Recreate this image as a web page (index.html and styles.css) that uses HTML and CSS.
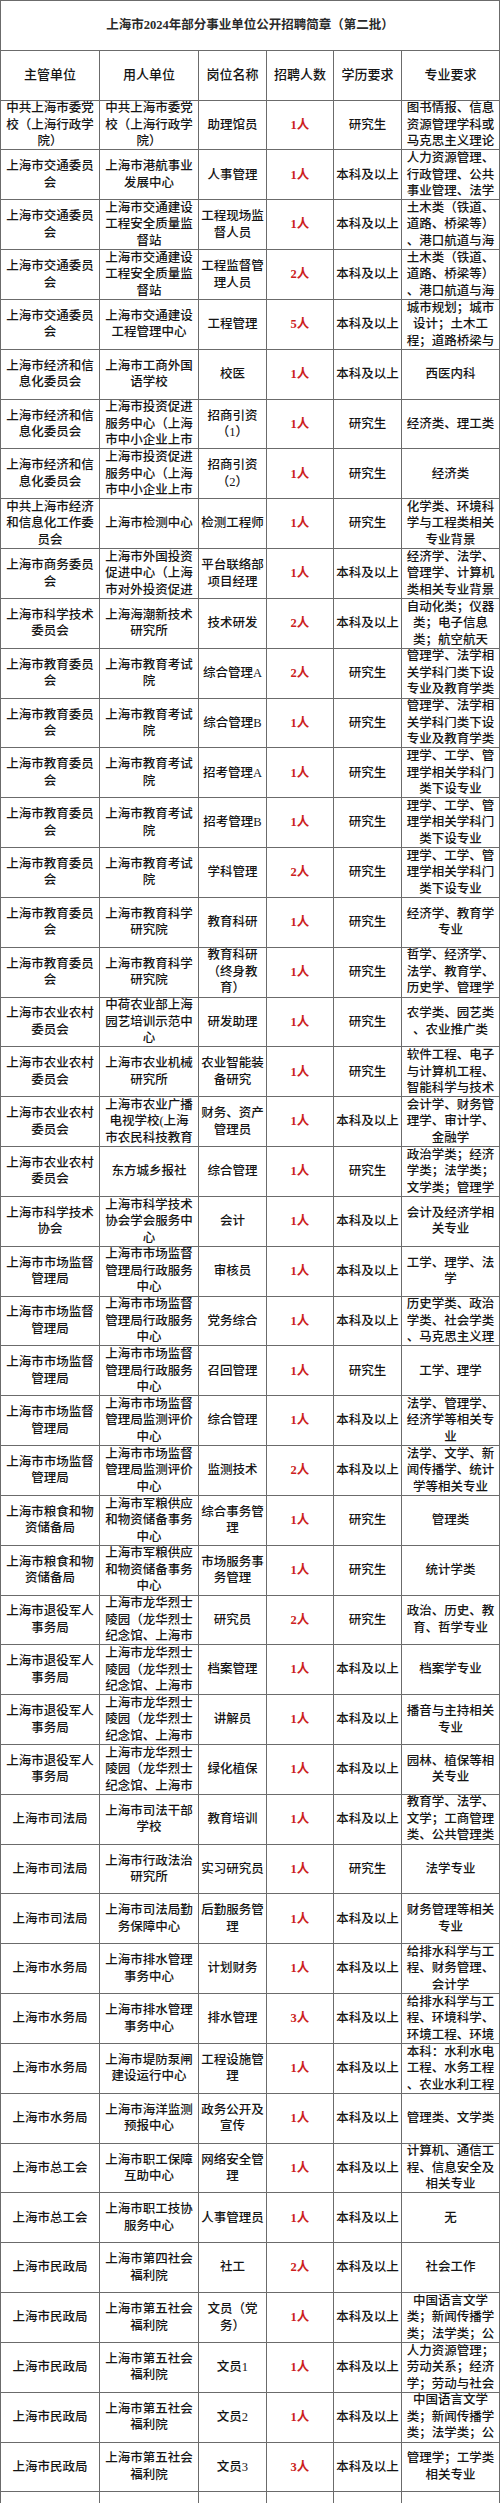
FILE: index.html
```html
<!DOCTYPE html>
<html lang="zh-CN">
<head>
<meta charset="utf-8">
<title>上海市2024年部分事业单位公开招聘简章（第二批）</title>
<link rel="stylesheet" href="styles.css">
</head>
<body>
<div class="page">
<div class="sheet">
<div class="c title"><span>上海市2024年部分事业单位公开招聘简章（第二批）</span></div>

<div class="c h"><span>主管单位</span></div><div class="c h"><span>用人单位</span></div><div class="c h"><span>岗位名称</span></div><div class="c h"><span>招聘人数</span></div><div class="c h"><span>学历要求</span></div><div class="c h"><span>专业要求</span></div>

<div class="c"><span>中共上海市委党<br>校（上海行政学<br>院）</span></div><div class="c"><span>中共上海市委党<br>校（上海行政学<br>院）</span></div><div class="c"><span>助理馆员</span></div><div class="c n"><span>1人</span></div><div class="c"><span>研究生</span></div><div class="c"><span>图书情报、信息<br>资源管理学科或<br>马克思主义理论</span></div>

<div class="c"><span>上海市交通委员<br>会</span></div><div class="c"><span>上海市港航事业<br>发展中心</span></div><div class="c"><span>人事管理</span></div><div class="c n"><span>1人</span></div><div class="c"><span>本科及以上</span></div><div class="c"><span>人力资源管理、<br>行政管理、公共<br>事业管理、法学</span></div>

<div class="c"><span>上海市交通委员<br>会</span></div><div class="c"><span>上海市交通建设<br>工程安全质量监<br>督站</span></div><div class="c"><span>工程现场监<br>督人员</span></div><div class="c n"><span>1人</span></div><div class="c"><span>本科及以上</span></div><div class="c"><span>土木类（铁道、<br>道路、桥梁等）<br>、港口航道与海</span></div>

<div class="c"><span>上海市交通委员<br>会</span></div><div class="c"><span>上海市交通建设<br>工程安全质量监<br>督站</span></div><div class="c"><span>工程监督管<br>理人员</span></div><div class="c n"><span>2人</span></div><div class="c"><span>本科及以上</span></div><div class="c"><span>土木类（铁道、<br>道路、桥梁等）<br>、港口航道与海</span></div>

<div class="c"><span>上海市交通委员<br>会</span></div><div class="c"><span>上海市交通建设<br>工程管理中心</span></div><div class="c"><span>工程管理</span></div><div class="c n"><span>5人</span></div><div class="c"><span>本科及以上</span></div><div class="c"><span>城市规划；城市<br>设计；土木工<br>程；道路桥梁与</span></div>

<div class="c"><span>上海市经济和信<br>息化委员会</span></div><div class="c"><span>上海市工商外国<br>语学校</span></div><div class="c"><span>校医</span></div><div class="c n"><span>1人</span></div><div class="c"><span>本科及以上</span></div><div class="c"><span>西医内科</span></div>

<div class="c"><span>上海市经济和信<br>息化委员会</span></div><div class="c"><span>上海市投资促进<br>服务中心（上海<br>市中小企业上市</span></div><div class="c"><span>招商引资<br>（1）</span></div><div class="c n"><span>1人</span></div><div class="c"><span>研究生</span></div><div class="c"><span>经济类、理工类</span></div>

<div class="c"><span>上海市经济和信<br>息化委员会</span></div><div class="c"><span>上海市投资促进<br>服务中心（上海<br>市中小企业上市</span></div><div class="c"><span>招商引资<br>（2）</span></div><div class="c n"><span>1人</span></div><div class="c"><span>研究生</span></div><div class="c"><span>经济类</span></div>

<div class="c"><span>中共上海市经济<br>和信息化工作委<br>员会</span></div><div class="c"><span>上海市检测中心</span></div><div class="c"><span>检测工程师</span></div><div class="c n"><span>1人</span></div><div class="c"><span>研究生</span></div><div class="c"><span>化学类、环境科<br>学与工程类相关<br>专业背景</span></div>

<div class="c"><span>上海市商务委员<br>会</span></div><div class="c"><span>上海市外国投资<br>促进中心（上海<br>市对外投资促进</span></div><div class="c"><span>平台联络部<br>项目经理</span></div><div class="c n"><span>1人</span></div><div class="c"><span>本科及以上</span></div><div class="c"><span>经济学、法学、<br>管理学、计算机<br>类相关专业背景</span></div>

<div class="c"><span>上海市科学技术<br>委员会</span></div><div class="c"><span>上海海潮新技术<br>研究所</span></div><div class="c"><span>技术研发</span></div><div class="c n"><span>2人</span></div><div class="c"><span>本科及以上</span></div><div class="c"><span>自动化类；仪器<br>类；电子信息<br>类；航空航天</span></div>

<div class="c"><span>上海市教育委员<br>会</span></div><div class="c"><span>上海市教育考试<br>院</span></div><div class="c"><span>综合管理A</span></div><div class="c n"><span>2人</span></div><div class="c"><span>研究生</span></div><div class="c"><span>管理学、法学相<br>关学科门类下设<br>专业及教育学类</span></div>

<div class="c"><span>上海市教育委员<br>会</span></div><div class="c"><span>上海市教育考试<br>院</span></div><div class="c"><span>综合管理B</span></div><div class="c n"><span>1人</span></div><div class="c"><span>研究生</span></div><div class="c"><span>管理学、法学相<br>关学科门类下设<br>专业及教育学类</span></div>

<div class="c"><span>上海市教育委员<br>会</span></div><div class="c"><span>上海市教育考试<br>院</span></div><div class="c"><span>招考管理A</span></div><div class="c n"><span>1人</span></div><div class="c"><span>研究生</span></div><div class="c"><span>理学、工学、管<br>理学相关学科门<br>类下设专业</span></div>

<div class="c"><span>上海市教育委员<br>会</span></div><div class="c"><span>上海市教育考试<br>院</span></div><div class="c"><span>招考管理B</span></div><div class="c n"><span>1人</span></div><div class="c"><span>研究生</span></div><div class="c"><span>理学、工学、管<br>理学相关学科门<br>类下设专业</span></div>

<div class="c"><span>上海市教育委员<br>会</span></div><div class="c"><span>上海市教育考试<br>院</span></div><div class="c"><span>学科管理</span></div><div class="c n"><span>2人</span></div><div class="c"><span>研究生</span></div><div class="c"><span>理学、工学、管<br>理学相关学科门<br>类下设专业</span></div>

<div class="c"><span>上海市教育委员<br>会</span></div><div class="c"><span>上海市教育科学<br>研究院</span></div><div class="c"><span>教育科研</span></div><div class="c n"><span>1人</span></div><div class="c"><span>研究生</span></div><div class="c"><span>经济学、教育学<br>专业</span></div>

<div class="c"><span>上海市教育委员<br>会</span></div><div class="c"><span>上海市教育科学<br>研究院</span></div><div class="c"><span>教育科研<br>（终身教<br>育）</span></div><div class="c n"><span>1人</span></div><div class="c"><span>研究生</span></div><div class="c"><span>哲学、经济学、<br>法学、教育学、<br>历史学、管理学</span></div>

<div class="c"><span>上海市农业农村<br>委员会</span></div><div class="c"><span>中荷农业部上海<br>园艺培训示范中<br>心</span></div><div class="c"><span>研发助理</span></div><div class="c n"><span>1人</span></div><div class="c"><span>研究生</span></div><div class="c"><span>农学类、园艺类<br>、农业推广类</span></div>

<div class="c"><span>上海市农业农村<br>委员会</span></div><div class="c"><span>上海市农业机械<br>研究所</span></div><div class="c"><span>农业智能装<br>备研究</span></div><div class="c n"><span>1人</span></div><div class="c"><span>研究生</span></div><div class="c"><span>软件工程、电子<br>与计算机工程、<br>智能科学与技术</span></div>

<div class="c"><span>上海市农业农村<br>委员会</span></div><div class="c"><span>上海市农业广播<br>电视学校(上海<br>市农民科技教育</span></div><div class="c"><span>财务、资产<br>管理员</span></div><div class="c n"><span>1人</span></div><div class="c"><span>本科及以上</span></div><div class="c"><span>会计学、财务管<br>理学、审计学、<br>金融学</span></div>

<div class="c"><span>上海市农业农村<br>委员会</span></div><div class="c"><span>东方城乡报社</span></div><div class="c"><span>综合管理</span></div><div class="c n"><span>1人</span></div><div class="c"><span>研究生</span></div><div class="c"><span>政治学类；经济<br>学类；法学类；<br>文学类；管理学</span></div>

<div class="c"><span>上海市科学技术<br>协会</span></div><div class="c"><span>上海市科学技术<br>协会学会服务中<br>心</span></div><div class="c"><span>会计</span></div><div class="c n"><span>1人</span></div><div class="c"><span>本科及以上</span></div><div class="c"><span>会计及经济学相<br>关专业</span></div>

<div class="c"><span>上海市市场监督<br>管理局</span></div><div class="c"><span>上海市市场监督<br>管理局行政服务<br>中心</span></div><div class="c"><span>审核员</span></div><div class="c n"><span>1人</span></div><div class="c"><span>本科及以上</span></div><div class="c"><span>工学、理学、法<br>学</span></div>

<div class="c"><span>上海市市场监督<br>管理局</span></div><div class="c"><span>上海市市场监督<br>管理局行政服务<br>中心</span></div><div class="c"><span>党务综合</span></div><div class="c n"><span>1人</span></div><div class="c"><span>本科及以上</span></div><div class="c"><span>历史学类、政治<br>学类、社会学类<br>、马克思主义理</span></div>

<div class="c"><span>上海市市场监督<br>管理局</span></div><div class="c"><span>上海市市场监督<br>管理局行政服务<br>中心</span></div><div class="c"><span>召回管理</span></div><div class="c n"><span>1人</span></div><div class="c"><span>研究生</span></div><div class="c"><span>工学、理学</span></div>

<div class="c"><span>上海市市场监督<br>管理局</span></div><div class="c"><span>上海市市场监督<br>管理局监测评价<br>中心</span></div><div class="c"><span>综合管理</span></div><div class="c n"><span>1人</span></div><div class="c"><span>本科及以上</span></div><div class="c"><span>法学、管理学、<br>经济学等相关专<br>业</span></div>

<div class="c"><span>上海市市场监督<br>管理局</span></div><div class="c"><span>上海市市场监督<br>管理局监测评价<br>中心</span></div><div class="c"><span>监测技术</span></div><div class="c n"><span>2人</span></div><div class="c"><span>本科及以上</span></div><div class="c"><span>法学、文学、新<br>闻传播学、统计<br>学等相关专业</span></div>

<div class="c"><span>上海市粮食和物<br>资储备局</span></div><div class="c"><span>上海市军粮供应<br>和物资储备事务<br>中心</span></div><div class="c"><span>综合事务管<br>理</span></div><div class="c n"><span>1人</span></div><div class="c"><span>研究生</span></div><div class="c"><span>管理类</span></div>

<div class="c"><span>上海市粮食和物<br>资储备局</span></div><div class="c"><span>上海市军粮供应<br>和物资储备事务<br>中心</span></div><div class="c"><span>市场服务事<br>务管理</span></div><div class="c n"><span>1人</span></div><div class="c"><span>研究生</span></div><div class="c"><span>统计学类</span></div>

<div class="c"><span>上海市退役军人<br>事务局</span></div><div class="c"><span>上海市龙华烈士<br>陵园（龙华烈士<br>纪念馆、上海市</span></div><div class="c"><span>研究员</span></div><div class="c n"><span>2人</span></div><div class="c"><span>研究生</span></div><div class="c"><span>政治、历史、教<br>育、哲学专业</span></div>

<div class="c"><span>上海市退役军人<br>事务局</span></div><div class="c"><span>上海市龙华烈士<br>陵园（龙华烈士<br>纪念馆、上海市</span></div><div class="c"><span>档案管理</span></div><div class="c n"><span>1人</span></div><div class="c"><span>本科及以上</span></div><div class="c"><span>档案学专业</span></div>

<div class="c"><span>上海市退役军人<br>事务局</span></div><div class="c"><span>上海市龙华烈士<br>陵园（龙华烈士<br>纪念馆、上海市</span></div><div class="c"><span>讲解员</span></div><div class="c n"><span>1人</span></div><div class="c"><span>本科及以上</span></div><div class="c"><span>播音与主持相关<br>专业</span></div>

<div class="c"><span>上海市退役军人<br>事务局</span></div><div class="c"><span>上海市龙华烈士<br>陵园（龙华烈士<br>纪念馆、上海市</span></div><div class="c"><span>绿化植保</span></div><div class="c n"><span>1人</span></div><div class="c"><span>本科及以上</span></div><div class="c"><span>园林、植保等相<br>关专业</span></div>

<div class="c"><span>上海市司法局</span></div><div class="c"><span>上海市司法干部<br>学校</span></div><div class="c"><span>教育培训</span></div><div class="c n"><span>1人</span></div><div class="c"><span>本科及以上</span></div><div class="c"><span>教育学、法学、<br>文学；工商管理<br>类、公共管理类</span></div>

<div class="c"><span>上海市司法局</span></div><div class="c"><span>上海市行政法治<br>研究所</span></div><div class="c"><span>实习研究员</span></div><div class="c n"><span>1人</span></div><div class="c"><span>研究生</span></div><div class="c"><span>法学专业</span></div>

<div class="c"><span>上海市司法局</span></div><div class="c"><span>上海市司法局勤<br>务保障中心</span></div><div class="c"><span>后勤服务管<br>理</span></div><div class="c n"><span>1人</span></div><div class="c"><span>本科及以上</span></div><div class="c"><span>财务管理等相关<br>专业</span></div>

<div class="c"><span>上海市水务局</span></div><div class="c"><span>上海市排水管理<br>事务中心</span></div><div class="c"><span>计划财务</span></div><div class="c n"><span>1人</span></div><div class="c"><span>本科及以上</span></div><div class="c"><span>给排水科学与工<br>程、财务管理、<br>会计学</span></div>

<div class="c"><span>上海市水务局</span></div><div class="c"><span>上海市排水管理<br>事务中心</span></div><div class="c"><span>排水管理</span></div><div class="c n"><span>3人</span></div><div class="c"><span>本科及以上</span></div><div class="c"><span>给排水科学与工<br>程、环境科学、<br>环境工程、环境</span></div>

<div class="c"><span>上海市水务局</span></div><div class="c"><span>上海市堤防泵闸<br>建设运行中心</span></div><div class="c"><span>工程设施管<br>理</span></div><div class="c n"><span>1人</span></div><div class="c"><span>本科及以上</span></div><div class="c"><span>本科：水利水电<br>工程、水务工程<br>、农业水利工程</span></div>

<div class="c"><span>上海市水务局</span></div><div class="c"><span>上海市海洋监测<br>预报中心</span></div><div class="c"><span>政务公开及<br>宣传</span></div><div class="c n"><span>1人</span></div><div class="c"><span>本科及以上</span></div><div class="c"><span>管理类、文学类</span></div>

<div class="c"><span>上海市总工会</span></div><div class="c"><span>上海市职工保障<br>互助中心</span></div><div class="c"><span>网络安全管<br>理</span></div><div class="c n"><span>1人</span></div><div class="c"><span>本科及以上</span></div><div class="c"><span>计算机、通信工<br>程、信息安全及<br>相关专业</span></div>

<div class="c"><span>上海市总工会</span></div><div class="c"><span>上海市职工技协<br>服务中心</span></div><div class="c"><span>人事管理员</span></div><div class="c n"><span>1人</span></div><div class="c"><span>本科及以上</span></div><div class="c"><span>无</span></div>

<div class="c"><span>上海市民政局</span></div><div class="c"><span>上海市第四社会<br>福利院</span></div><div class="c"><span>社工</span></div><div class="c n"><span>2人</span></div><div class="c"><span>本科及以上</span></div><div class="c"><span>社会工作</span></div>

<div class="c"><span>上海市民政局</span></div><div class="c"><span>上海市第五社会<br>福利院</span></div><div class="c"><span>文员（党<br>务）</span></div><div class="c n"><span>1人</span></div><div class="c"><span>本科及以上</span></div><div class="c"><span>中国语言文学<br>类；新闻传播学<br>类；法学类；公</span></div>

<div class="c"><span>上海市民政局</span></div><div class="c"><span>上海市第五社会<br>福利院</span></div><div class="c"><span>文员1</span></div><div class="c n"><span>1人</span></div><div class="c"><span>本科及以上</span></div><div class="c"><span>人力资源管理；<br>劳动关系；经济<br>学；劳动与社会</span></div>

<div class="c"><span>上海市民政局</span></div><div class="c"><span>上海市第五社会<br>福利院</span></div><div class="c"><span>文员2</span></div><div class="c n"><span>1人</span></div><div class="c"><span>本科及以上</span></div><div class="c"><span>中国语言文学<br>类；新闻传播学<br>类；法学类；公</span></div>

<div class="c"><span>上海市民政局</span></div><div class="c"><span>上海市第五社会<br>福利院</span></div><div class="c"><span>文员3</span></div><div class="c n"><span>3人</span></div><div class="c"><span>本科及以上</span></div><div class="c"><span>管理学；工学类<br>相关专业</span></div>

<div class="c"></div><div class="c"></div><div class="c"></div><div class="c"></div><div class="c"></div><div class="c"></div>
</div>
</div>
</body>
</html>
```

FILE: styles.css
```css
html, body {
  margin: 0;
  padding: 0;
  background: #ffffff;
}

.page {
  width: 500px;
  height: 2503px;
  overflow: hidden;
}

.sheet {
  display: grid;
  grid-template-columns: 99px 99px 68px 67px 68px 98px;
  grid-auto-rows: 49.83px;
  width: 500px;
  box-sizing: border-box;
  border-left: 1px solid #6b6b6b;
  border-top: 1px solid #6b6b6b;
  font-family: "Liberation Serif", "Noto Sans CJK SC", serif;
  font-size: 12.5px;
  font-weight: 500;
  line-height: 16.5px;
  color: #141414;
}

.c {
  display: flex;
  align-items: center;
  justify-content: center;
  text-align: center;
  overflow: hidden;
  min-width: 0;
  min-height: 0;
  border-right: 1px solid #6b6b6b;
  border-bottom: 1px solid #6b6b6b;
}

.c span {
  white-space: nowrap;
}

.title {
  grid-column: 1 / -1;
}

.title span {
  font-weight: 700;
  color: #2a2a2a;
}

.h span {
  font-size: 13px;
}

.n span {
  color: #cc1f1f;
  font-weight: 700;
}
```
